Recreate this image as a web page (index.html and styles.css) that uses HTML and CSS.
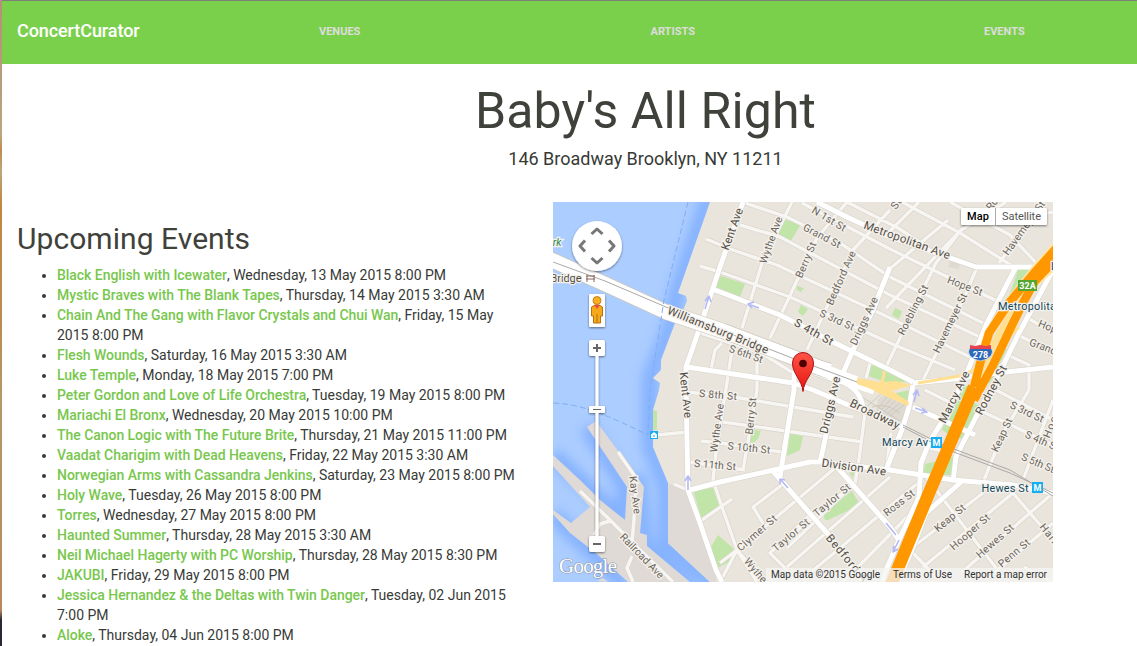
FILE: index.html
```html
<!DOCTYPE html>
<html lang="en">
<head>
<meta charset="utf-8">
<title>ConcertCurator</title>
<link rel="stylesheet" href="styles.css">
</head>
<body>
<div class="page">
<nav class="navbar">
  <a class="brand">ConcertCurator</a>
  <div class="links"><a>VENUES</a><a>ARTISTS</a><a>EVENTS</a></div>
</nav>
<header class="venue">
  <h1><span>Baby's All Right</span></h1>
  <p>146 Broadway Brooklyn, NY 11211</p>
</header>
<main class="content">
<section class="events">
  <h2>Upcoming Events</h2>
  <ul>
    <li><a>Black English with Icewater</a>, Wednesday, 13 May 2015 8:00 PM</li>
    <li><a>Mystic Braves with The Blank Tapes</a>, Thursday, 14 May 2015 3:30 AM</li>
    <li><a>Chain And The Gang with Flavor Crystals and Chui Wan</a>, Friday, 15 May<br>2015 8:00 PM</li>
    <li><a>Flesh Wounds</a>, Saturday, 16 May 2015 3:30 AM</li>
    <li><a>Luke Temple</a>, Monday, 18 May 2015 7:00 PM</li>
    <li><a>Peter Gordon and Love of Life Orchestra</a>, Tuesday, 19 May 2015 8:00 PM</li>
    <li><a>Mariachi El Bronx</a>, Wednesday, 20 May 2015 10:00 PM</li>
    <li><a>The Canon Logic with The Future Brite</a>, Thursday, 21 May 2015 11:00 PM</li>
    <li><a>Vaadat Charigim with Dead Heavens</a>, Friday, 22 May 2015 3:30 AM</li>
    <li><a>Norwegian Arms with Cassandra Jenkins</a>, Saturday, 23 May 2015 8:00 PM</li>
    <li><a>Holy Wave</a>, Tuesday, 26 May 2015 8:00 PM</li>
    <li><a>Torres</a>, Wednesday, 27 May 2015 8:00 PM</li>
    <li><a>Haunted Summer</a>, Thursday, 28 May 2015 3:30 AM</li>
    <li><a>Neil Michael Hagerty with PC Worship</a>, Thursday, 28 May 2015 8:30 PM</li>
    <li><a>JAKUBI</a>, Friday, 29 May 2015 8:00 PM</li>
    <li><a>Jessica Hernandez &amp; the Deltas with Twin Danger</a>, Tuesday, 02 Jun 2015<br>7:00 PM</li>
    <li><a>Aloke</a>, Thursday, 04 Jun 2015 8:00 PM</li>
  </ul>
</section>
<svg class="map" viewBox="553 202 500 380" width="500" height="380">
  <defs>
    <filter id="sh" x="-30%" y="-30%" width="160%" height="170%"><feDropShadow dx="0" dy="1" stdDeviation="1.3" flood-color="#000" flood-opacity=".5"/></filter>
    <filter id="soft"><feGaussianBlur stdDeviation="6"/></filter>
    <linearGradient id="pin" x1="0" y1="0" x2="0" y2="1"><stop offset="0" stop-color="#ff5547"/><stop offset="1" stop-color="#e5140f"/></linearGradient>
    <!-- side streets, stroked twice: outline, then surface -->
    <g id="minor">
      <path d="M792 202L763 260 742 328M847 202L817 238 770 338M890 210L853 250 827 307 807 350M1006 202L961 230 936 263 919 297 899 340 886 367M1053 212L1034 216 999 263M976 270L963 300 923 380M745 203L787 217 840 243 890 277 983 323M740 225L780 237 890 295 980 337M727 248L777 265 890 318 970 357M720 272L790 297 890 343 955 370M802 203L890 249 999 302M847 202L898 228 936 253M902 202L960 233 1014 267M950 202L1010 235 1040 267M919 202L886 235M948 220L886 272M706 239L723 246M700 266L720 272"/>
      <path d="M886 308L961 230M732 350L716 453 713 480 723 510 737 550 757 573M757 360V390L743 470M795 367L793 390M700 333L763 354 793 373M711 370L715 350 722 343M687 392L740 398 853 417M723 422L863 442M701 441L720 443 782 452M690 462L745 470M865 413L858 467 855 483 787 548M835 468L737 550 720 563M850 487L787 539M782 485L753 507 763 523M809 516L770 553 787 570M890 477L787 567M918 483L810 573M912 512L853 572 842 582M737 550L757 582M702 520L732 499M866 378L870 363M720 582L737 550M656 435L688 432M674 484L688 490"/>
      <path d="M983 493L913 547M1013 493L923 567M1053 493L962 572M1053 523L986 580M926 477L1003 577M1013 493L1053 540M913 553L936 577M979 410L1053 445M996 390L1053 420M1029 390L1003 433 984 480M1053 400L1023 480M1026 317L1053 333M1020 336L1053 353M1008 355L1029 365V390M925 390L949 402M891 433L886 470M925 447L960 455M1024 567L1053 582"/>
      <path d="M618 452L636 478 634 520 632 542M580 491L610 520 632 542 673 582M594 535L600 524 610 521M632 556L627 568 633 582"/>
    </g>
    <g id="major">
      <path d="M743 202L720 267 700 327 686 367V390L688 490 700 523 716 570 722 582M715 290L780 315 833 342 890 370 913 382M817 202L847 217 890 237 936 253 976 267H1040M890 267L873 310 853 350 843 373 833 390 825 440 820 462M794 372V390L781 470 780 478M772 470L827 533 863 582M690 490L720 482 810 462H820L890 470 953 480 1013 485 1053 493M837 467L890 527 899 540M1016 267L987 323 968 370 949 410 929 443 921 463 919 497 899 540 886 570 882 582M1053 270L1033 307 1019 333 996 380 976 417 956 457 953 482M961 482L926 513 913 547 898 582M687 367L720 372 793 383 813 390 853 407 890 420 903 427M1053 367L996 373 955 379 913 383M913 385L909 407 903 427 886 470M913 407L975 435"/>
      <path d="M815 373L845 383Q861 391 863 408"/>
    </g>
  </defs>
  <rect class="water" x="553" y="202" width="500" height="380"/>
  <path class="shore" filter="url(#soft)" d="M709 196L676 295 672 323 650 378 650 447 666 485 666 543 718 588M587 427L625 487 622 520 553 455M553 515L600 560 625 586M638 475L645 545 690 590"/>
  <!-- land -->
  <path class="land" d="M710 202L678 293 686 296 687 301 681 315 675 318 675 323 661 360 661 370 653 378 660 383 659 390 653 410 653 447 668 483 668 543 710 582H1053V202z"/>
  <path class="industrial" d="M668 483L688 490 716 570 716 582H710L668 543zM587 427L596 421 636 475 644 487 640 533 647 535 647 546 690 582H628L597 554 570 533 553 514 553 510 571 523 590 507 553 466V455L580 480 600 500 625 520 627 487zM597 581L603 578 608 582z"/>
  <!-- parks -->
  <path class="park" d="M782 219L801 224 789 244 777 238zM718 275L745 284 740 297 715 290zM797 286L804 288 801 292 797 290zM801 305L808 309 803 316 798 312zM653 410L657 411V430H653zM869 364L890 371 912 382 885 382 866 375zM892 394L914 389 909 402zM895 308L902 311 899 319 892 315zM1018 270H1034L1009 306 1003 314zM1000 347L1007 349 990 383 983 381zM958 386H976L950 435 942 430zM965 398L982 407 965 440 950 435zM925 464L953 457 951 475 923 474zM751 429L761 431 758 439 753 443 749 441zM790 434L803 436 800 450 787 456zM825 520L823 514 852 491 860 505 828 520zM693 490L713 488 720 508 702 520zM718 535L733 548 736 558 714 570 709 550zM849 473L854 472 853 478z"/>
  <path class="grey" d="M950 261L960 260 959 269 948 267zM878 399L888 392 909 406 902 424 876 414z"/>
  <path class="tracks" d="M862 397L900 421M864 409L882 393M879 407L889 394M881 410L893 397M884 412L897 399M887 414L901 402M890 416L905 404M872 407Q885 402 900 413"/>
  <use href="#minor" class="minor-case"/>
  <use href="#minor" class="minor"/>
  <use href="#major" class="major-case"/>
  <use href="#major" class="major"/>
  <!-- bridge -->
  <path class="bridge-case" d="M545 257L605 284 666 312 723 331 792 357 820 368 830 371"/>
  <path class="bridge" d="M545 257L605 284 666 312 723 331 792 357 820 368 830 371"/>
  <path class="bridge slim" d="M820 366L857 380M823 373L850 383 874 391"/>
  <path class="rail" d="M553 262L605 281 666 307 723 331 792 358 857 382M903 425L943 445 1010 470 1053 496M903 427L943 448 1010 473 1053 493"/>
  <path class="ramp-fill" d="M857 378L880 382 896 381 912 385 892 391 909 402 908 406 878 393 871 389 857 384z"/>
  <path class="ramp" d="M880 384Q884 380 884 371"/>
  <path class="ramp" d="M918 383L960 376 978 368 1019 327"/>
  <path class="ramp wide" d="M1025 290L1000 333 978 378"/>
  <path class="hw-case" d="M1058 244L1035 270 1009 303 989 333 981 360 974 387 929 493 889 590M1058 262L1029 287 1013 323 974 400"/>
  <path class="hw" d="M1060 244L1035 272 1009 303 989 333 981 360 974 387M1058 257L1035 281 1024 301 1013 323 993 365 974 400"/>
  <path class="hw wide" d="M974 387L929 493 889 590"/>
  <path class="ferry" d="M688 202L664 300 650 390 648 434M553 403C580 404 600 413 625 424L648 435"/>
  <path class="arrow" d="M748 304L759 308M754 302L748 304 752 308M709 296L705 309M705 301L709 296 711 302M688 490V476M685 481L688 476 691 481M780 479L788 488M780 484V479L785 480M886 523L896 535M914 402L917 390M913 395L917 390 919 396M915 408L927 412M922 408L927 412 921 413M899 540L893 552M894 546L893 552 898 549"/>
  <!-- street names -->
  <g class="label big">
    <text transform="translate(732 229) rotate(-70)" textLength="44">Kent Ave</text>
    <text transform="translate(686 395) rotate(84)" textLength="46">Kent Ave</text>
    <text transform="translate(718 330) rotate(22)" textLength="108">Williamsburg Bridge</text>
    <text transform="translate(814 332) rotate(29)" textLength="43">S 4th St</text>
    <text transform="translate(907 240) rotate(20)" textLength="91">Metropolitan Ave</text>
    <text transform="translate(830 405) rotate(-77)" textLength="58">Driggs Ave</text>
    <text transform="translate(875 414) rotate(26)" textLength="54">Broadway</text>
    <text transform="translate(854 467) rotate(8)" textLength="65">Division Ave</text>
    <text transform="translate(954 397) rotate(-64)" textLength="56">Marcy Ave</text>
    <text transform="translate(991 390) rotate(-62)" textLength="54">Rodney St</text>
    <text transform="translate(847 558) rotate(50)" textLength="58">Bedford A</text>
  </g>
  <g class="label">
    <text transform="translate(771 240) rotate(-70)" textLength="49">Wythe Ave</text>
    <text transform="translate(806 260) rotate(-67)" textLength="38">Berry St</text>
    <text transform="translate(829 219) rotate(31)" textLength="38">N 1st St</text>
    <text transform="translate(822 236) rotate(27)" textLength="41">Grand St</text>
    <text transform="translate(841 278) rotate(-66)" textLength="58">Bedford Ave</text>
    <text transform="translate(864 321) rotate(-65)" textLength="52">Driggs Ave</text>
    <text transform="translate(837 320) rotate(24)" textLength="37">S 3rd St</text>
    <text transform="translate(746 354) rotate(19)" textLength="35">S 6th St</text>
    <text transform="translate(718 395) rotate(5)" textLength="38">S 8th St</text>
    <text transform="translate(749 448) rotate(6)" textLength="43">S 10th St</text>
    <text transform="translate(715 465) rotate(5)" textLength="42">S 11th St</text>
    <text transform="translate(717 428) rotate(-82)" textLength="49">Wythe Ave</text>
    <text transform="translate(751 416) rotate(-84)" textLength="37">Berry St</text>
    <text transform="translate(757 533) rotate(-41)" textLength="49">Clymer St</text>
    <text transform="translate(791 535) rotate(-40)" textLength="45">Taylor St</text>
    <text transform="translate(832 500) rotate(-40)" textLength="45">Taylor St</text>
    <text transform="translate(899 503) rotate(-38)" textLength="36">Ross St</text>
    <text transform="translate(950 518) rotate(-40)" textLength="37">Keap St</text>
    <text transform="translate(970 532) rotate(-41)" textLength="49">Hooper St</text>
    <text transform="translate(995 541) rotate(-41)" textLength="46">Hewes St</text>
    <text transform="translate(1014 553) rotate(-40)" textLength="38">Penn St</text>
    <text transform="translate(965 286) rotate(21)" textLength="37">Hope St</text>
    <text transform="translate(913 310) rotate(-63)" textLength="55">Roebling St</text>
    <text transform="translate(950 323) rotate(-64)" textLength="65">Havemeyer St</text>
    <text transform="translate(1024 228) rotate(-54)" textLength="64">Havemeyer St</text>
    <text transform="translate(1027 412) rotate(25)" textLength="36">S 3rd St</text>
    <text transform="translate(1042 441) rotate(24)" textLength="36">S 4th St</text>
    <text transform="translate(1038 463) rotate(23)" textLength="35">S 5th St</text>
    <text transform="translate(1002 435) rotate(-65)" textLength="36">Keap St</text>
    <text transform="translate(1054 418) rotate(-68)" textLength="42">Hooper</text>
    <text transform="translate(1056 330) rotate(22)" textLength="37">Hope St</text>
    <text transform="translate(1049 349) rotate(21)" textLength="41">Grand St</text>
    <text transform="translate(1056 543) rotate(52)" textLength="46">Harrison</text>
    <text transform="translate(762 578) rotate(50)" textLength="49">Wythe Ave</text>
    <text transform="translate(635 495) rotate(83)" textLength="38">Kay Ave</text>
    <text transform="translate(642 556) rotate(46)" textLength="58">Railroad Ave</text>
    <text transform="translate(896 204) rotate(-55)">St</text>
    <text transform="translate(992 204) rotate(-52)">Ro</text>
  </g>
  <g class="label big place"><text transform="translate(566 278)" textLength="31">Bridge</text></g>
  <g class="label park-name"><text transform="translate(557 242)">rk</text></g>
  <path d="M587 275V282M594 275V282M586 276H595M586 279H595" fill="none" stroke="#8b665a"/>
  <g class="label station">
    <text transform="translate(905 442)" textLength="46">Marcy Av</text>
    <text transform="translate(1005 488)" textLength="47">Hewes St</text>
    <text x="998" y="306" dy=".35em" style="text-anchor:start" textLength="58">Metropolita</text>
    <text x="1051" y="266" dy=".35em" style="text-anchor:start">L</text>
  </g>
  <g class="metro"><rect x="931" y="437" width="11" height="11"/><rect x="1032" y="482" width="11" height="11"/><rect x="650" y="431" width="8" height="8"/><text x="936.5" y="446">M</text><text x="1037.5" y="491">M</text><path d="M651 434.500L654 432 657 434.500V438H651z" fill="#fff"/><path d="M653 436H655" stroke="#16aef0"/></g>
  <g class="sign"><rect x="1018" y="280" width="19" height="11" fill="#56a52f"/><text x="1027.500" y="289">32A</text>
    <path d="M970 347H991Q994 352 991 356 987 360 980.500 361 974 360 970 356 967 352 970 347z" fill="#2e69b7" stroke="#fff" stroke-width=".6"/><path d="M970 349V345L975 346 980 345 986 346 991 345V349z" fill="#e8424f"/><text x="980.500" y="357.500">278</text></g>
  <!-- marker -->
  <path d="M803 391.500C802 380 792.500 374 792.500 363A10.500 10.500 0 0 1 813.500 363C813.500 374 804 380 803 391.500z" fill="url(#pin)" stroke="#b01014"/><circle cx="803" cy="363.500" r="3.800" fill="#510000"/>
  <!-- controls -->
  <g filter="url(#sh)"><circle cx="597" cy="246" r="25" fill="#fff"/><rect x="589" y="294" width="16" height="33" rx="1" fill="#fff"/><rect x="595.500" y="353" width="3" height="185" fill="#fff"/><rect x="589" y="340" width="16" height="16" rx="2" fill="#fff"/><rect x="589" y="536" width="16" height="16" rx="2" fill="#fff"/><rect x="589" y="406" width="16" height="7" rx="1" fill="#fff"/></g>
  <path d="M591.500 234L597 229 602.500 234M591.500 258L597 263 602.500 258M585 240.500L580 246 585 251.500M609 240.500L614 246 609 251.500" fill="none" stroke="#777" stroke-width="3"/>
  <path d="M593 348H601M597 344V352M593 544H601" fill="none" stroke="#666" stroke-width="2"/><path d="M593 409.500H601" stroke="#666"/>
  <path d="M591.500 307L595 305H599L602.500 307V316H600.500V323H593.500V316H591.500z" fill="#f6a91b" stroke="#b87009"/><path d="M597 314V323" stroke="#b87009"/><path d="M594 305H600L597 309z" fill="#ef4b3d"/><circle cx="597" cy="300.500" r="4" fill="#faae21" stroke="#b87009" stroke-width=".8"/>
  <g filter="url(#sh)"><rect x="961" y="208" width="86" height="17" rx="1" fill="#fff"/></g><path d="M995.500 208V225" stroke="#aaa"/>
  <g class="control"><text x="967" y="220" textLength="22" font-weight="500" fill="#000">Map</text><text x="1002" y="220" textLength="39" fill="#555">Satellite</text></g>
  <text class="google" x="559" y="573" textLength="58">Google</text>
  <rect x="766" y="568" width="287" height="14" fill="#f5f4f2" opacity=".76"/>
  <g class="credit"><text x="771" y="578" textLength="109">Map data ©2015 Google</text><text x="893" y="578" textLength="59">Terms of Use</text><text x="964" y="578" textLength="83">Report a map error</text></g>
</svg>
</main>
</div>
</body>
</html>
```
FILE: styles.css
```css
* { box-sizing: border-box; }
body { margin: 0; height: 646px; overflow: hidden; background: linear-gradient(#b98d79, #b8a27c 110px, #bda781 135px, #c18b4c 150px, #bba67b 170px, #c18642 205px, #b98d52 330px, #b5976b 400px, #b88762 610px, #282733 620px); font: 14px/20px Roboto, sans-serif; color: #373a36; }
.page { margin-left: 2px; height: 646px; overflow: hidden; background: #fff; border-top: 1px solid #7c8079; }
.navbar { display: flex; height: 63px; background: #7bd04b; padding: 20px 0 0 15px; }
.brand { color: #fff; width: 156px; font-size: 18px; font-weight: 500; line-height: 20px; letter-spacing: -.08px; }
.links { flex: 1; display: grid; grid-template-columns: 331.5px 333.5px 1fr; padding-left: 146px; color: #ddd; font-size: 11px; font-weight: 700; line-height: 21px; }
.venue { text-align: center; padding: 20px 0 0 152px; }
h1 { margin: 0; font-size: 50px; line-height: 55px; font-weight: 400; letter-spacing: .1px; color: #3f413b; }
.venue p { margin: 8px 0 0; font-size: 18px; line-height: 24px; }
.content { display: flex; margin-top: 31px; }
.events { width: 551px; flex: none; padding: 20px 0 0 15px; }
h2 { margin: 0 0 10px; font-size: 30px; line-height: 33px; font-weight: 400; letter-spacing: .05px; color: #3f413b; }
ul { margin: 0; padding-left: 40px; }
li { white-space: nowrap; }
li a { color: #78c74d; font-weight: 500; letter-spacing: -.04px; }
.map { display: block; flex: none; overflow: hidden; font-family: Roboto, sans-serif; }
.map path { stroke-linejoin: round; }
.water { fill: #accdff; }
.shore { fill: none; stroke: #77a8ff; stroke-width: 16; opacity: .75; }
.land { fill: #e9e5dc; }
.industrial { fill: #dfdad5; }
.park { fill: #c1e4a9; }
.grey { fill: #dedad1; }
.tracks { fill: none; stroke: #c9c4ba; stroke-width: .8; }
.minor-case { fill: none; stroke: #d8d3ca; stroke-width: 4.6; }
.minor { fill: none; stroke: #f8f6f3; stroke-width: 3.4; }
.major-case { fill: none; stroke: #d9d5ce; stroke-width: 6.2; }
.major { fill: none; stroke: #fff; stroke-width: 5; }
.bridge-case { fill: none; stroke: #cbc6bb; stroke-width: 16; }
.bridge { fill: none; stroke: #fff; stroke-width: 14.5; }
.bridge.slim { stroke-width: 7; }
.rail { fill: none; stroke: #aaa9a7; stroke-width: 1; }
.ramp-fill { fill: #ffe092; }
.ramp { fill: none; stroke: #ffe092; stroke-width: 3; }
.ramp.wide { stroke-width: 7; }
.hw-case { fill: none; stroke: #ffe6ac; stroke-width: 9.5; }
.hw { fill: none; stroke: #ff9800; stroke-width: 8.5; }
.hw.wide { stroke-width: 12.5; }
.ferry { fill: none; stroke: #82aeef; stroke-dasharray: 6 3; }
.arrow { fill: none; stroke: #b5b9f4; stroke-width: 1.6; }
.label text { font-size: 10.5px; fill: #6b655b; stroke: #f4f1ec; stroke-width: 2.5px; paint-order: stroke; text-anchor: middle; dominant-baseline: central; }
.label.big text { font-size: 11.5px; fill: #514c43; }
.label.place text { font-size: 11px; }
.label.park-name text { fill: #2c8b48; font-style: italic; }
.label.station text { font-size: 11px; fill: #12485e; dominant-baseline: auto; }
.label.station text[transform] { dominant-baseline: central; }
.metro rect { fill: #16aef0; }
.metro text, .sign text { fill: #fff; font-size: 9px; font-weight: 700; text-anchor: middle; }
.control text { font-size: 11px; }
.google { font: 21px "Liberation Serif", serif; fill: #fff; stroke: #8b93a2; stroke-width: 1px; paint-order: stroke; }
.credit text { font-size: 10px; fill: #333; }
```
